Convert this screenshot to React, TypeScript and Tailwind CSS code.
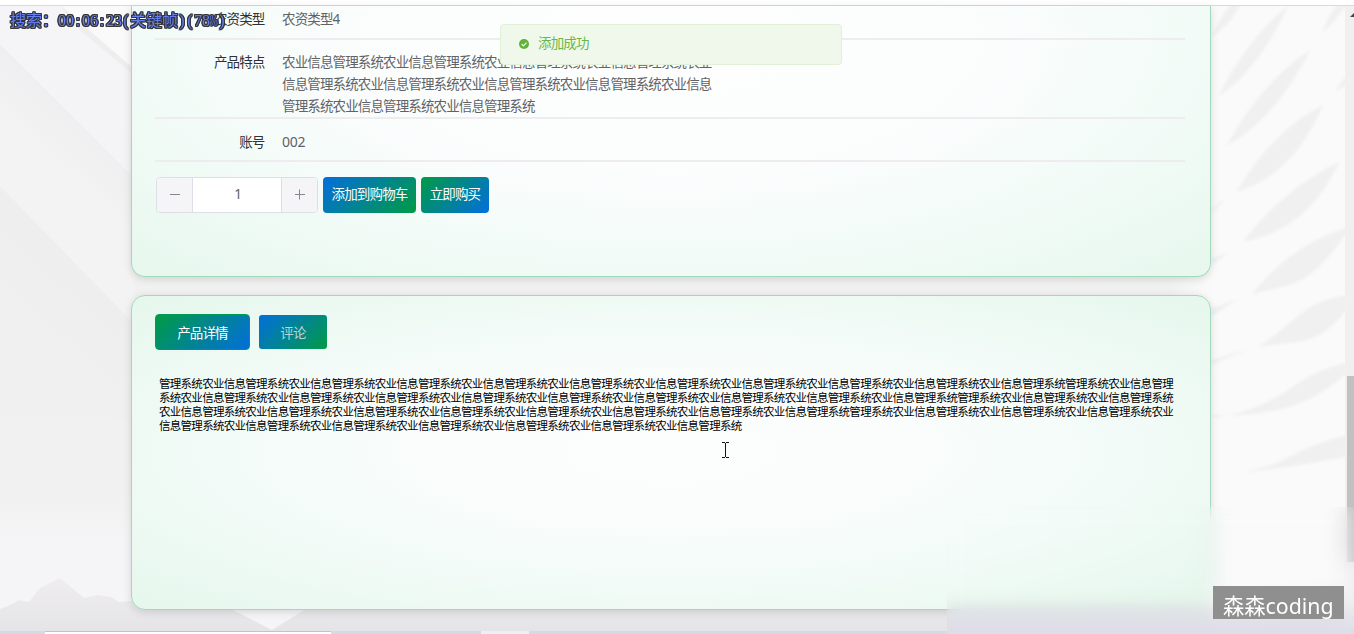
import React from "react";

const UNIT = "农业信息管理系统";
const BLOCK = "管理系统" + UNIT.repeat(10);
const DETAIL = BLOCK.repeat(4);
const DETAIL_LINES = [0, 94, 188, 282].map((i) => DETAIL.slice(i, i + 94));
const FEATURE = UNIT.repeat(11);
const FEATURE_LINES = [0, 34, 68].map((i) => FEATURE.slice(i, i + 34));

function Backdrop() {
  return (
    <svg className="absolute inset-0 h-full w-full" viewBox="0 0 1354 634" preserveAspectRatio="none">
      <defs>
        <linearGradient id="base" x1="0" y1="0" x2="0" y2="1">
          <stop offset="0" stopColor="#f5f4f7" />
          <stop offset="0.3" stopColor="#f4f3f5" />
          <stop offset="0.5" stopColor="#f0f0f0" />
          <stop offset="0.78" stopColor="#f1f1f1" />
          <stop offset="0.86" stopColor="#f5f5f7" />
          <stop offset="1" stopColor="#f5f5f7" />
        </linearGradient>
        <linearGradient id="hill" x1="0" y1="578" x2="0" y2="634" gradientUnits="userSpaceOnUse">
          <stop offset="0" stopColor="#efedef" />
          <stop offset="1" stopColor="#e4e3e5" />
        </linearGradient>
        <linearGradient id="fold" x1="65" y1="105" x2="0" y2="175" gradientUnits="userSpaceOnUse">
          <stop offset="0" stopColor="#efeef0" />
          <stop offset="0.5" stopColor="#f3f3f3" />
          <stop offset="1" stopColor="#f3f3f4" />
        </linearGradient>
        <linearGradient id="fold2" x1="65" y1="250" x2="0" y2="320" gradientUnits="userSpaceOnUse">
          <stop offset="0" stopColor="#efeeef" />
          <stop offset="1" stopColor="#f0f0f0" />
        </linearGradient>
        <linearGradient id="side" x1="1170" y1="0" x2="1250" y2="0" gradientUnits="userSpaceOnUse">
          <stop offset="0" stopColor="#fafafb" stopOpacity="0" />
          <stop offset="0.5" stopColor="#fafafb" />
          <stop offset="1" stopColor="#fafafb" />
        </linearGradient>
        <filter id="soft"><feGaussianBlur stdDeviation="4" /></filter>
      </defs>
      <rect width="1354" height="634" fill="url(#base)" />
      <path d="M0 44L135 179V325L0 186Z" fill="url(#fold)" />
      <path d="M0 186L135 325V420H0Z" fill="url(#fold2)" />
      <path d="M60 5L135 70V5Z" fill="#fafafa" />
      <path d="M60 5L135 70V76L75 26Z" fill="#efeeef" />
      <rect x="1170" width="184" height="634" fill="url(#side)" />
      <g transform="translate(1150 0) scale(.33333)" fill="#f0f0f1" filter="url(#soft)">
        <path d="M245 10Q205 60 185 112Q240 75 275 10Z" />
        <path d="M415 15Q290 120 205 290Q325 210 415 15Z" />
        <path d="M560 15Q535 50 515 100Q560 60 590 15Z" />
        <path d="M482 148Q330 250 230 437Q375 360 482 148Z" />
        <path d="M590 225L555 275L590 255Z" />
        <path d="M520 315Q370 390 260 575Q425 530 520 315Z" />
        <path d="M568 485Q395 570 280 725Q475 690 568 485Z" />
        <path d="M590 683Q430 730 305 882L420 855Q500 830 590 700Z" />
        <path d="M590 885Q490 900 430 960Q370 1010 325 1040L450 1025Q530 1010 590 930Z" />
        <path d="M590 1088Q490 1110 400 1180Q300 1240 190 1255V1245Q280 1250 350 1235Q480 1220 590 1120Z" />
        <path d="M590 1306Q500 1325 400 1380Q300 1425 190 1425Q350 1415 590 1370Z" />
        <path d="M185 630Q200 610 225 600L185 640Z" />
        <path d="M185 775L240 755L185 795Z" />
        <path d="M185 925Q230 910 265 895L185 950Z" />
        <path d="M185 1080L300 1045L185 1095Z" />
      </g>
      <path
        d="M0 609L10 605L19 600L29 602L40 588L50 583L60 578L72 588L84 598L98 595L111 597L119 602L130 601L190 610H233L272 630L304 610H1215L1354 590V634H0Z"
        fill="url(#hill)"
      />
    </svg>
  );
}

function Caption() {
  const narrow = (s: string) =>
    s.split("").map((c, i) => (
      <span key={i} className="inline-flex w-2 justify-center">
        {c === "%" ? <span className="inline-block scale-x-60">{c}</span> : c}
      </span>
    ));
  return (
    <div className="absolute left-[10px] top-[11px] z-20 flex items-baseline whitespace-nowrap font-['Liberation_Serif','Noto_Sans_CJK_SC',serif] text-[16px] leading-[20px] text-[#6580ee] [filter:drop-shadow(1px_0_#34343a)_drop-shadow(-1px_0_#34343a)_drop-shadow(0_1px_#34343a)_drop-shadow(0_-1px_#34343a)]">
      搜索：{narrow("00:06:23(")}关键帧{narrow(")(78%)")}
    </div>
  );
}

function Row({ label, h, children }: { label: string; h: string; children: React.ReactNode }) {
  return (
    <div className={"mr-[2px] flex shrink-0 border-b-2 border-[#eeecee] text-[13.5px] tracking-[-0.87px] leading-[22px] " + h}>
      <div className="w-[109.5px] shrink-0 text-right text-[#303133]">{label}</div>
      <div className="ml-[17.5px] whitespace-nowrap text-[#606266]">{children}</div>
    </div>
  );
}

export default function App() {
  return (
    <div className="relative flex h-[634px] w-[1354px] flex-col overflow-hidden bg-[#f4f4f5] font-['Noto_Sans','Noto_Sans_CJK_SC',sans-serif]">
      <Backdrop />
      <div className="relative h-[6px] shrink-0 border-b border-[#d9d9db] bg-white" />
      <div className="relative flex h-[625px] shrink-0">
        <main className="flex w-[1345px] flex-col pl-[131px]">
          <section className="flex h-[271px] w-[1080px] flex-col rounded-b-[14px] border border-t-0 border-[#a2d8bb] bg-[radial-gradient(ellipse_800px_340px_at_50%_12%,#fefefe_0%,#fbfdfd_40%,#f2fbf7_66%,#e5f7ec_100%)] px-[23px] shadow-[0_2px_8px_rgba(0,0,0,0.13)]">
            <Row label="农资类型" h="h-[34px] pt-[2px]">农资类型4</Row>
            <Row label="产品特点" h="h-[79px] pt-[11px]">
              {FEATURE_LINES.map((l, i) => <div key={i}>{l}</div>)}
            </Row>
            <Row label="账号" h="h-[43px] pt-[12px]"><span className="text-[14px] tracking-[-0.2px]">002</span></Row>
            <div className="mt-[15px] flex h-[36px] items-stretch pl-px text-[13.5px]">
              <div className="flex w-[162px] overflow-hidden rounded-[4px] border border-[#dcdfe6] bg-white text-[#606266]">
                <div className="flex w-[36px] items-center justify-center border-r border-[#dcdfe6] bg-[#f5f5f8]">
                  <svg className="-mt-px" width="12" height="12" viewBox="0 0 12 12" stroke="#85888e"><path d="M1 5.5H11" /></svg>
                </div>
                <div className="flex-1 pl-[2px] text-center leading-[33px]">1</div>
                <div className="flex w-[36px] items-center justify-center border-l border-[#dcdfe6] bg-[#f5f5f8]">
                  <svg className="-mt-px ml-px" width="12" height="12" viewBox="0 0 12 12" stroke="#85888e"><path d="M1 5.5H11M5.5 0.5V10.5" /></svg>
                </div>
              </div>
              <button className="ml-[5px] w-[93px] rounded-[4px] bg-[linear-gradient(135deg,#036edc,#009b45)] pb-[2px] tracking-[-0.87px] text-white">添加到购物车</button>
              <button className="ml-[5px] w-[68px] rounded-[4px] bg-[linear-gradient(135deg,#009b45,#036edc)] pb-[2px] tracking-[-0.87px] text-white">立即购买</button>
            </div>
          </section>
          <section className="mt-[18px] h-[315px] w-[1080px] rounded-[14px] border border-[#a2d8bb] bg-[radial-gradient(ellipse_farthest-corner_at_center,#fcfdfd_0%,#fafdfc_30%,#f3fbf8_58%,#e5f7ec_100%)] px-[23px] pt-[18px] shadow-[0_2px_8px_rgba(0,0,0,0.13)]">
            <div className="flex items-center text-[13.5px] tracking-[-0.87px]">
              <button className="h-[36px] w-[95px] rounded-[4px] border border-[#009b55] bg-[linear-gradient(135deg,#009b45,#036edc)] pt-[2px] text-white">产品详情</button>
              <button className="ml-[9px] h-[34px] w-[68px] rounded-[3px] bg-[linear-gradient(135deg,#036edc,#009b45)] pt-[2px] text-[#b9d5d6]">评论</button>
            </div>
            <div className="mt-[27px] whitespace-nowrap pl-[4px] text-[11.5px] leading-[14px] tracking-[-0.713px] text-black">
              {DETAIL_LINES.map((l, i) => <div key={i}>{l}</div>)}
            </div>
          </section>
        </main>
        <aside className="flex w-[9px] flex-col items-end bg-[#f0f0f0]">
          <svg className="mt-[7px]" width="4" height="4" viewBox="0 0 4 4"><path d="M0 4L4 0V4Z" fill="#444" /></svg>
          <div className="mt-[359px] h-[186px] w-[7px] bg-[#c1c1c1]" />
        </aside>
      </div>
      <footer className="relative flex h-[3px] shrink-0 bg-[#d3daea]">
        <div className="ml-[45px] w-[286px] border-t border-[#c4c4c6] bg-white" />
        <div className="ml-[150px] w-[48px] bg-[#edeef7]" />
      </footer>

      <div className="absolute bottom-0 right-0 h-[127px] w-[407px] backdrop-blur-[10px]" />
      <div className="absolute bottom-0 right-0 h-[34px] w-[407px] bg-linear-to-b from-[#e0e0ea]/0 to-[#dcdde8]" />
      <div className="absolute left-[1213px] top-[586px] h-[33px] w-[131px] whitespace-nowrap bg-[#8f8f8f] pl-[10px] text-[21.3px] leading-[40px] text-white">
        森森coding
      </div>

      <div className="absolute left-[500px] top-[24px] z-10 flex h-[41px] w-[342px] items-center rounded-[4px] border border-[#e1f0d8] bg-[#f0f7eb] pl-[18px] text-[13.5px] tracking-[-0.87px] text-[#67b945]">
        <svg className="mr-[9px] -mt-px" width="10" height="10" viewBox="0 0 10 10">
          <circle cx="5" cy="5" r="5" fill="#5fb336" />
          <path d="M2.6 5.1L4.4 6.8L7.5 3.6" fill="none" stroke="#f0f7eb" strokeWidth="1.2" />
        </svg>
        <span className="-mt-[2px]">添加成功</span>
      </div>
      <Caption />
      <svg className="absolute left-[722px] top-[442px]" width="7" height="16" viewBox="0 0 7 16" fill="none" stroke="#111" shapeRendering="crispEdges">
        <path d="M0 0.5H3M4 0.5H7M3.5 1V15M0 15.5H3M4 15.5H7" />
      </svg>
    </div>
  );
}
